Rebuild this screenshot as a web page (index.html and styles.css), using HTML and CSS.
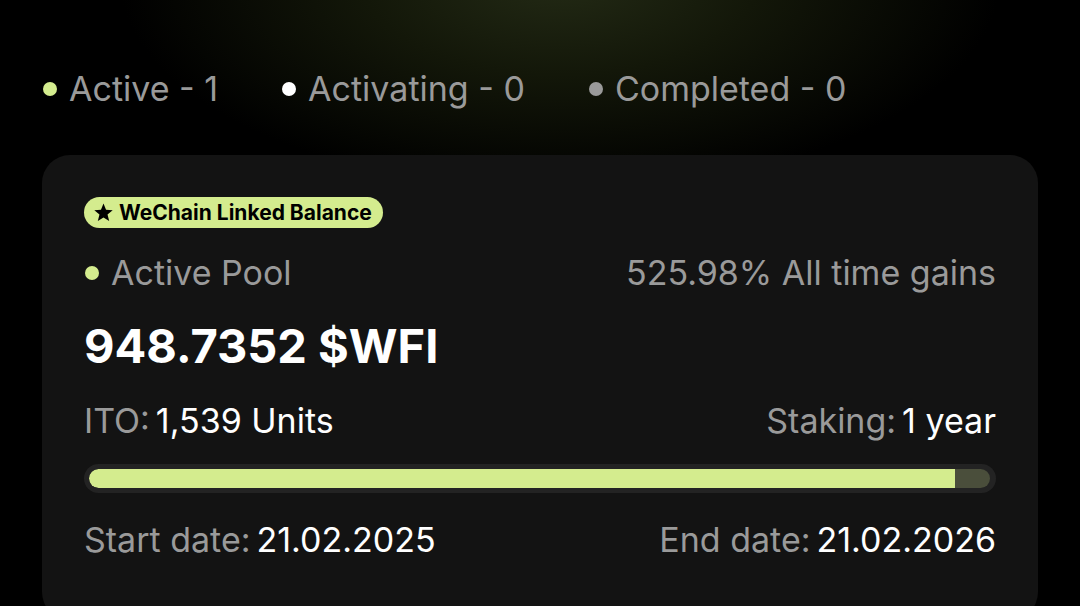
FILE: index.html
```html
<!DOCTYPE html>
<html>
<head>
<meta charset="utf-8">
<link rel="stylesheet" href="styles.css">
</head>
<body>
<div class="page">
  <div class="filters">
    <div class="filter"><span class="dot dot-lime"></span><span>Active - 1</span></div>
    <div class="filter"><span class="dot dot-white"></span><span>Activating - 0</span></div>
    <div class="filter"><span class="dot dot-gray"></span><span>Completed - 0</span></div>
  </div>
  <div class="card">
    <div class="badge">
      <svg class="star" viewBox="0 0 24 24" width="21" height="21"><path d="M12 1.8l2.9 7.1 7.6.5-5.9 4.9 1.9 7.4L12 17.6l-6.5 4.1 1.9-7.4-5.9-4.9 7.6-.5z" fill="#000"/></svg>
      <span>WeChain Linked Balance</span>
    </div>
    <div class="row">
      <div class="status"><span class="dot dot-lime"></span><span>Active Pool</span></div>
      <div class="muted">525.98% All time gains</div>
    </div>
    <div class="amount">948.7352 $WFI</div>
    <div class="row row-shift">
      <div><span class="muted">ITO:</span><span class="value">1,539 Units</span></div>
      <div><span class="muted">Staking:</span><span class="value">1 year</span></div>
    </div>
    <div class="track">
      <div class="inner">
        <div class="fill" style="width: 96.1%"></div>
      </div>
    </div>
    <div class="row row-dates">
      <div><span class="muted">Start date:</span><span class="value">21.02.2025</span></div>
      <div><span class="muted">End date:</span><span class="value">21.02.2026</span></div>
    </div>
  </div>
</div>
</body>
</html>
```

FILE: styles.css
```css
* { box-sizing: border-box; }
html, body { margin: 0; padding: 0; }
body {
  width: 1080px;
  height: 606px;
  overflow: hidden;
  background: #000;
  font-family: Inter, "Noto Sans", sans-serif;
}
.page {
  height: 606px;
  background: #000;
  position: relative;
  padding-top: 69px;
}
.page::before {
  content: "";
  position: absolute;
  left: 0;
  top: 0;
  width: 1080px;
  height: 200px;
  background: radial-gradient(ellipse 440px 210px at 560px -20px, #232a15 0%, #131709 45%, #000 100%);
}
.filters {
  position: relative;
  display: flex;
  gap: 64px;
  padding-left: 43px;
  font-size: 34px;
  line-height: 40px;
  color: #9a9a9a;
}
.filter {
  display: flex;
  align-items: center;
  gap: 12px;
}
.dot {
  width: 14px;
  height: 14px;
  border-radius: 50%;
  display: inline-block;
  flex: none;
}
.dot-lime { background: #d4ec8e; }
.dot-white { background: #fff; }
.dot-gray { background: #9a9a9a; }
.card {
  position: relative;
  margin: 46px 42px 0 42px;
  background: #131313;
  border-radius: 28px;
  padding: 42px 42px 60px 42px;
  display: flex;
  flex-direction: column;
  gap: 25px;
}
.badge {
  align-self: flex-start;
  display: flex;
  align-items: center;
  gap: 5px;
  height: 31px;
  padding: 0 11px 0 9px;
  border-radius: 16px;
  background: #d4ec8e;
  color: #000;
  font-weight: 700;
  font-size: 21px;
}
.star { display: block; }
.row {
  display: flex;
  justify-content: space-between;
  align-items: center;
  font-size: 34px;
  line-height: 40px;
}
.row-shift { margin-top: 2px; margin-bottom: -2px; }
.row-dates { margin-top: 2px; }
.status {
  display: flex;
  align-items: center;
  gap: 12px;
  color: #9a9a9a;
  padding-left: 1px;
}
.muted { color: #9a9a9a; }
.value { color: #fff; margin-left: 6px; }
.amount {
  color: #fff;
  font-weight: 700;
  font-size: 47px;
  line-height: 56px;
}
.track {
  height: 29px;
  border-radius: 15px;
  background: #232323;
  padding: 5px 6px 5px 5px;
}
.inner {
  height: 19px;
  border-radius: 10px;
  background: #4a4e3b;
  overflow: hidden;
}
.fill {
  height: 100%;
  background: #d4ec8e;
  border-radius: 10px 0 0 10px;
}
```
